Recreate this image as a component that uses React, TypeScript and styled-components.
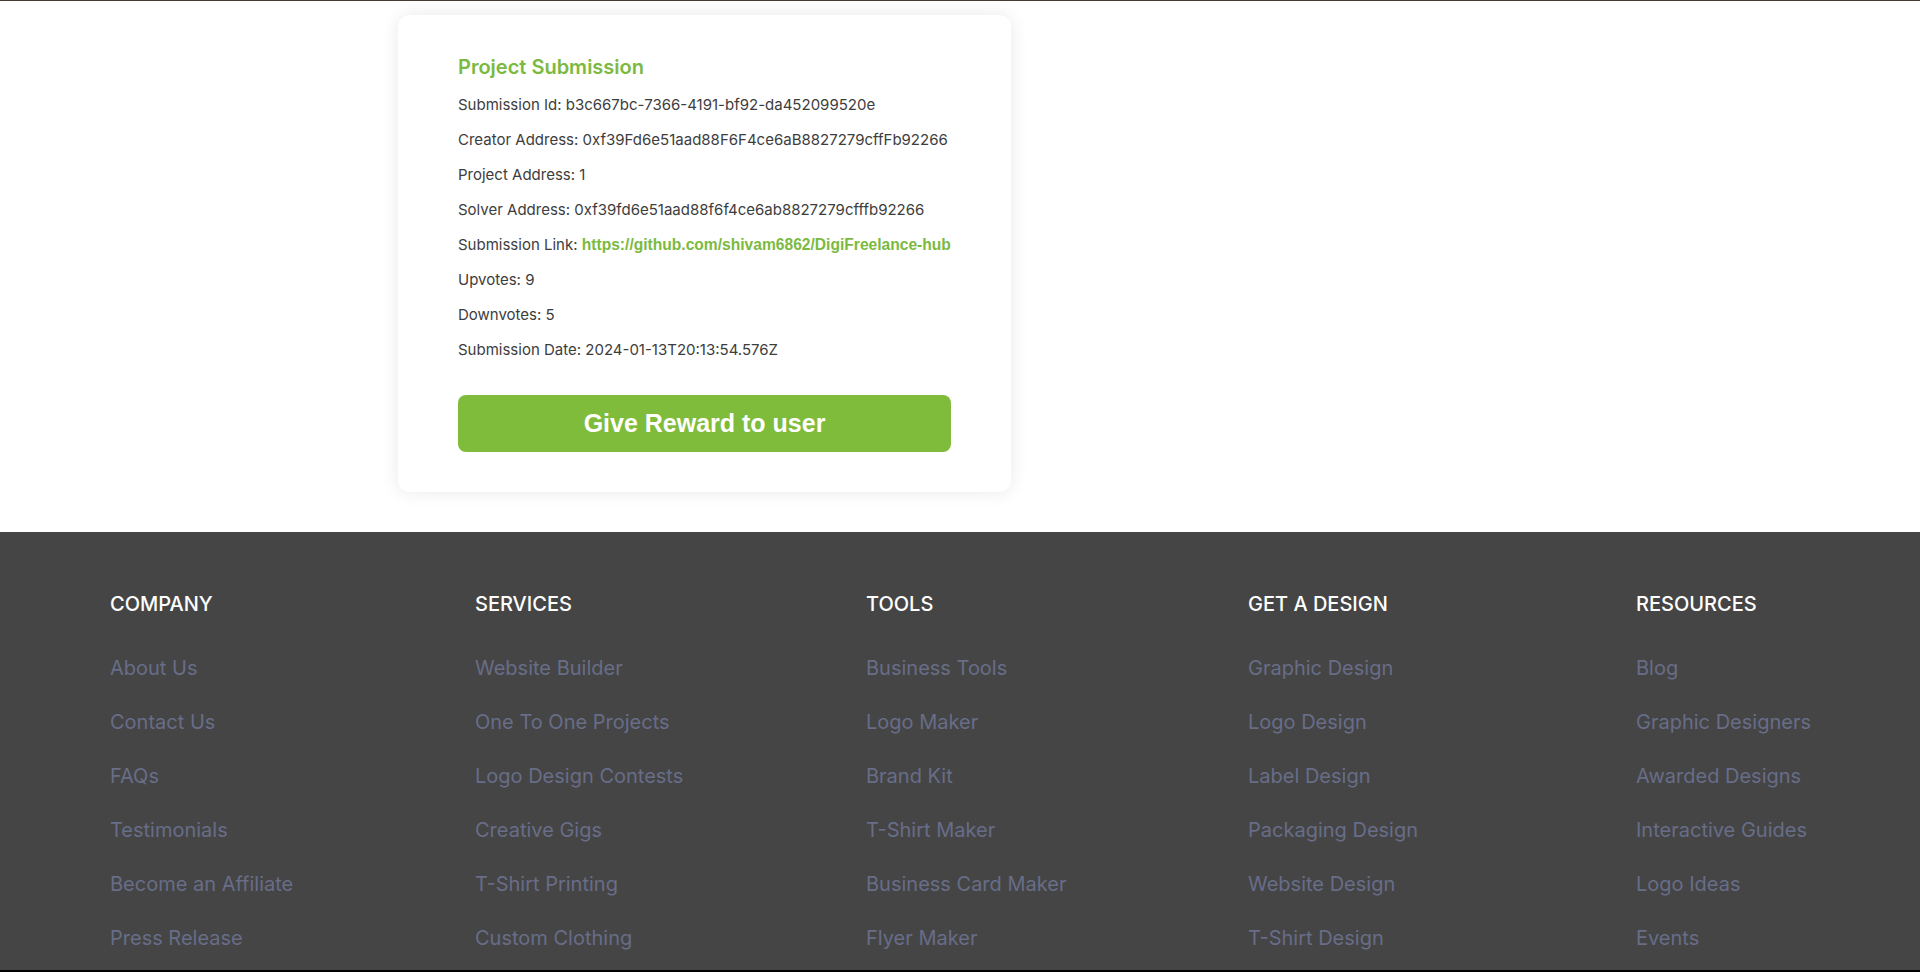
import React from "react";
import styled, { createGlobalStyle } from "styled-components";

const GlobalStyle = createGlobalStyle`
  * { box-sizing: border-box; }
  html, body { margin: 0; padding: 0; background: #ffffff; }
  body { font-family: Inter, "Noto Sans", sans-serif; }
`;

const TopRule = styled.div`
  height: 1px;
  background: #453b2e;
`;

const Main = styled.main`
  padding: 14px 0 40px 398px;
`;

const Card = styled.section`
  width: 613px;
  background: #ffffff;
  border-radius: 12px;
  box-shadow: 0 0 18px rgba(0, 0, 0, 0.09);
  padding: 40px 60px;
  display: flex;
  flex-direction: column;
`;

const Title = styled.h2`
  margin: 0 0 1px;
  font-family: Inter, sans-serif;
  font-size: 20px;
  line-height: 24px;
  font-weight: 600;
  color: #7cba3f;
`;

const Field = styled.p`
  margin: 15px 0 0;
  font-family: Inter, sans-serif;
  font-size: 15px;
  line-height: 20px;
  color: #3d3d3d;
`;

const LinkText = styled.a`
  font-family: "Liberation Sans", Arial, sans-serif;
  font-weight: 700;
  font-size: 15.6px;
  color: #7cba3f;
  text-decoration: none;
`;

const RewardButton = styled.button`
  margin-top: 35px;
  height: 57px;
  width: 100%;
  border: none;
  border-radius: 8px;
  background: #80bc3b;
  color: #ffffff;
  font-family: "Liberation Sans", Arial, sans-serif;
  font-weight: 700;
  font-size: 25px;
  cursor: pointer;
`;

const Footer = styled.footer`
  background: #454545;
`;

const FooterGrid = styled.div`
  display: grid;
  grid-template-columns: 365px 391px 382px 388px 1fr;
  padding: 60px 0 18px 110px;
`;

const Column = styled.div`
  display: flex;
  flex-direction: column;
`;

const Heading = styled.h3`
  margin: 0;
  font-family: Inter, sans-serif;
  font-size: 20px;
  line-height: 24px;
  font-weight: 500;
  color: #ffffff;
  text-transform: uppercase;
`;

const LinkList = styled.ul`
  list-style: none;
  margin: 38px 0 0;
  padding: 0;
  display: flex;
  flex-direction: column;
  gap: 26px;
`;

const FooterLink = styled.li`
  font-family: Inter, sans-serif;
  font-size: 20px;
  line-height: 28px;
  color: #686d88;
  white-space: nowrap;
`;

const BottomBar = styled.div`
  height: 40px;
  background: #000000;
`;

const columns: { title: string; links: string[] }[] = [
  {
    title: "Company",
    links: ["About Us", "Contact Us", "FAQs", "Testimonials", "Become an Affiliate", "Press Release"],
  },
  {
    title: "Services",
    links: ["Website Builder", "One To One Projects", "Logo Design Contests", "Creative Gigs", "T-Shirt Printing", "Custom Clothing"],
  },
  {
    title: "Tools",
    links: ["Business Tools", "Logo Maker", "Brand Kit", "T-Shirt Maker", "Business Card Maker", "Flyer Maker"],
  },
  {
    title: "Get a Design",
    links: ["Graphic Design", "Logo Design", "Label Design", "Packaging Design", "Website Design", "T-Shirt Design"],
  },
  {
    title: "Resources",
    links: ["Blog", "Graphic Designers", "Awarded Designs", "Interactive Guides", "Logo Ideas", "Events"],
  },
];

export default function App() {
  return (
    <>
      <GlobalStyle />
      <TopRule />
      <Main>
        <Card>
          <Title>Project Submission</Title>
          <Field>Submission Id: b3c667bc-7366-4191-bf92-da452099520e</Field>
          <Field>Creator Address: 0xf39Fd6e51aad88F6F4ce6aB8827279cffFb92266</Field>
          <Field>Project Address: 1</Field>
          <Field>Solver Address: 0xf39fd6e51aad88f6f4ce6ab8827279cfffb92266</Field>
          <Field>
            Submission Link:{" "}
            <LinkText href="#">https://github.com/shivam6862/DigiFreelance-hub</LinkText>
          </Field>
          <Field>Upvotes: 9</Field>
          <Field>Downvotes: 5</Field>
          <Field>Submission Date: 2024-01-13T20:13:54.576Z</Field>
          <RewardButton>Give Reward to user</RewardButton>
        </Card>
      </Main>
      <Footer>
        <FooterGrid>
          {columns.map((col) => (
            <Column key={col.title}>
              <Heading>{col.title}</Heading>
              <LinkList>
                {col.links.map((l) => (
                  <FooterLink key={l}>{l}</FooterLink>
                ))}
              </LinkList>
            </Column>
          ))}
        </FooterGrid>
        <BottomBar />
      </Footer>
    </>
  );
}
